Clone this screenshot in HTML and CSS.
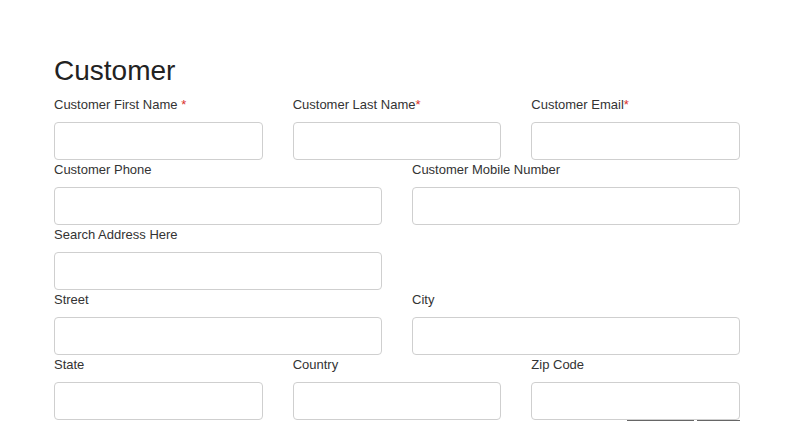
FILE: index.html
```html
<!DOCTYPE html>
<html>
<head>
<meta charset="utf-8">
<link rel="stylesheet" href="styles.css">
</head>
<body>
<div class="form">
  <h1 class="title">Customer</h1>
  <div class="row three">
    <div class="field"><label>Customer First Name <span class="req">*</span></label><input type="text"></div>
    <div class="field"><label>Customer Last Name<span class="req">*</span></label><input type="text"></div>
    <div class="field"><label>Customer Email<span class="req">*</span></label><input type="text"></div>
  </div>
  <div class="row two">
    <div class="field"><label>Customer Phone</label><input type="text"></div>
    <div class="field"><label>Customer Mobile Number</label><input type="text"></div>
  </div>
  <div class="row two">
    <div class="field"><label>Search Address Here</label><input type="text"></div>
  </div>
  <div class="row two">
    <div class="field"><label>Street</label><input type="text"></div>
    <div class="field"><label>City</label><input type="text"></div>
  </div>
  <div class="row three">
    <div class="field"><label>State</label><input type="text"></div>
    <div class="field"><label>Country</label><input type="text"></div>
    <div class="field"><label>Zip Code</label><input type="text"></div>
  </div>
  <div class="actions">
    <button class="btn btn-wide" type="button" aria-label="Save"></button>
    <button class="btn btn-narrow" type="button" aria-label="Cancel"></button>
  </div>
</div>
</body>
</html>
```
FILE: styles.css
```css
html, body {
  margin: 0;
  padding: 0;
  background: #fff;
}
body {
  font-family: "Liberation Sans", Arial, sans-serif;
  color: #333;
  overflow: hidden;
}
.form {
  width: 686px;
  margin-left: 54px;
  padding-top: 54px;
}
.title {
  font-size: 28px;
  font-weight: normal;
  line-height: 34px;
  margin: 0 0 7px 0;
  color: #222;
}
.row {
  display: grid;
  column-gap: 30px;
}
.row.three {
  grid-template-columns: 1fr 1fr 1fr;
}
.row.two {
  grid-template-columns: 1fr 1fr;
}
.field label {
  display: block;
  font-size: 13px;
  line-height: 18px;
  padding-top: 1px;
  margin-bottom: 8px;
  color: #333;
}
.req {
  color: #d9312b;
}
.field input {
  display: block;
  box-sizing: border-box;
  width: 100%;
  height: 38px;
  margin: 0;
  border: 1px solid #cfcfcf;
  border-radius: 4px;
  background: #fff;
  outline: none;
}
.actions {
  display: flex;
  justify-content: flex-end;
  gap: 3px;
}
.btn {
  height: 30px;
  border: none;
  border-top: 1px solid #666;
  background: #fff;
  padding: 0;
}
.btn-wide {
  width: 67px;
}
.btn-narrow {
  width: 43px;
}
```
